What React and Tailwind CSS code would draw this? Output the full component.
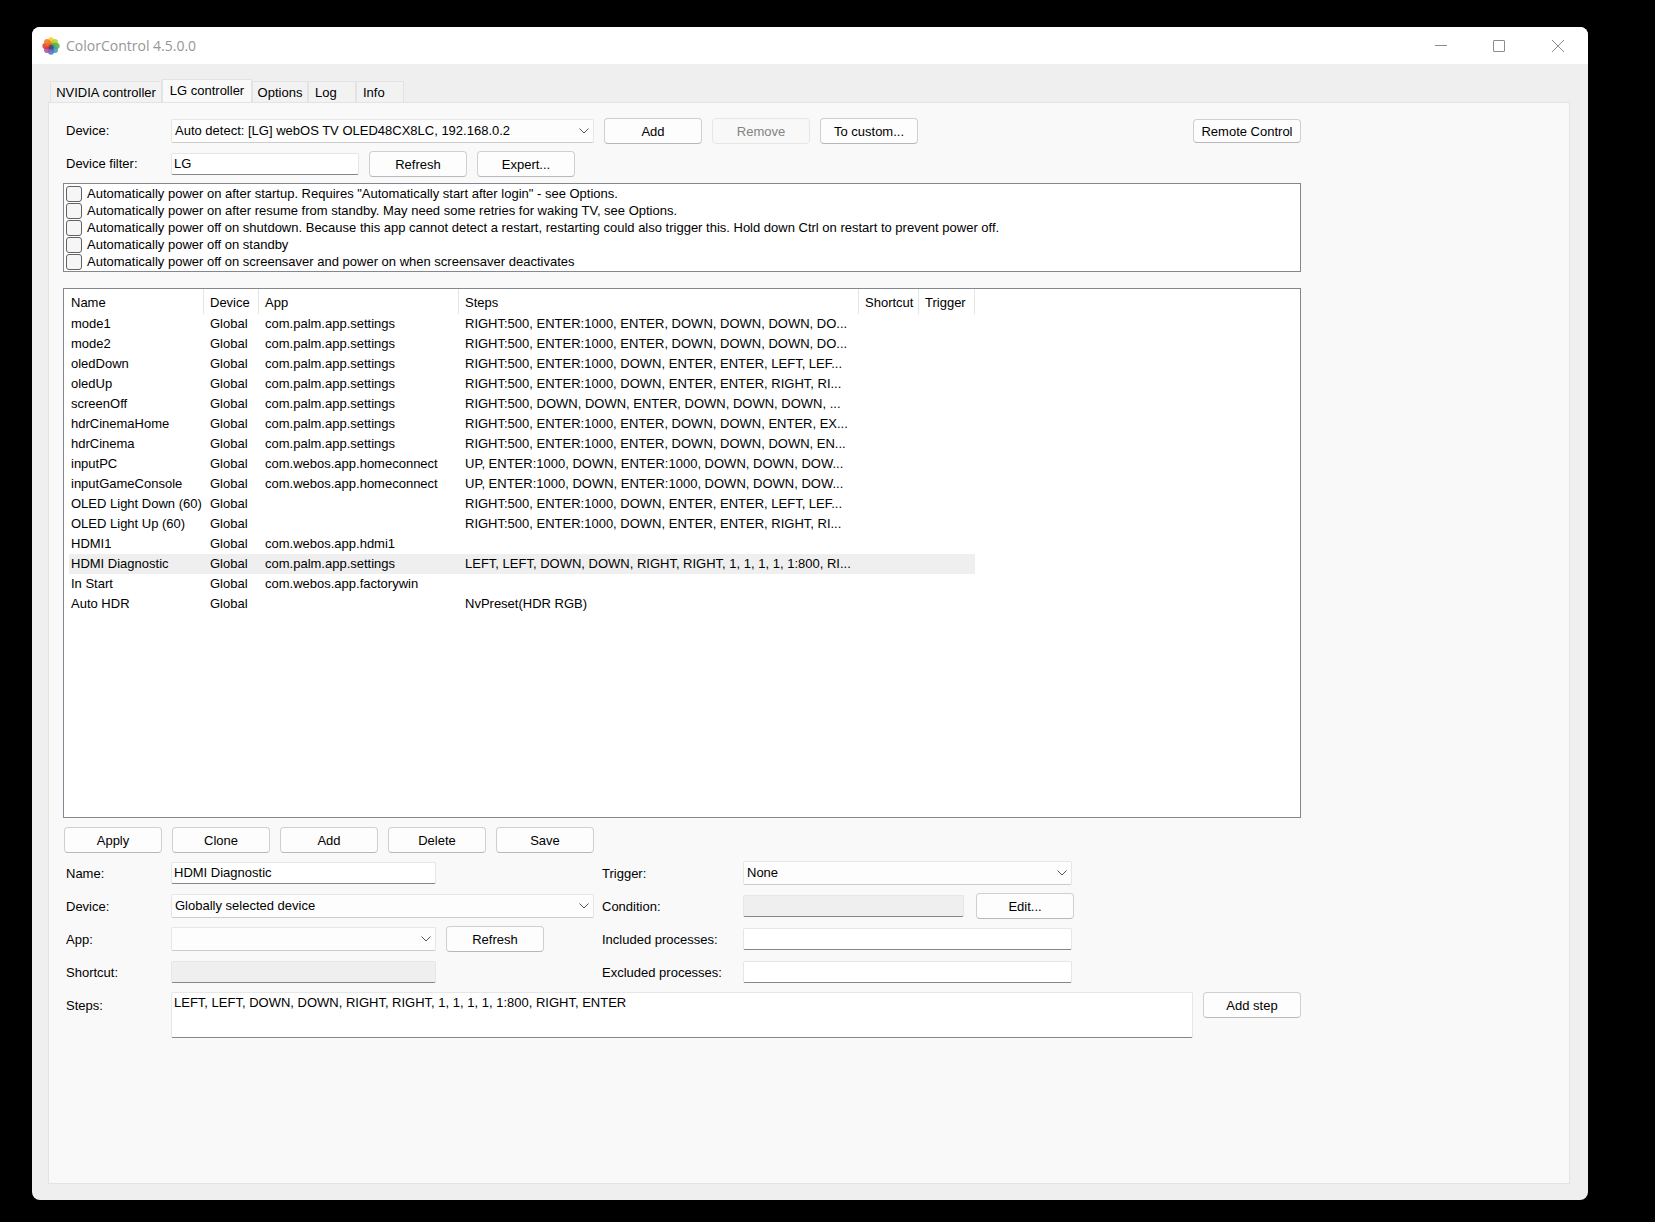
import { useState } from "react";

const tabs = [
  { txt: "NVIDIA controller", width: "w-[112px]" },
  { txt: "LG controller", width: "w-[90px]" },
  { txt: "Options", width: "w-14" },
  { txt: "Log", width: "w-12" },
  { txt: "Info", width: "w-12" },
];

const powerOptions = [
  'Automatically power on after startup. Requires "Automatically start after login" - see Options.',
  "Automatically power on after resume from standby. May need some retries for waking TV, see Options.",
  "Automatically power off on shutdown. Because this app cannot detect a restart, restarting could also trigger this. Hold down Ctrl on restart to prevent power off.",
  "Automatically power off on standby",
  "Automatically power off on screensaver and power on when screensaver deactivates",
];

const columns = [
  { txt: "Name", width: "w-[135px]", pad: "pl-[2px]" },
  { txt: "Device", width: "w-[55px]", pad: "pl-[6px]" },
  { txt: "App", width: "w-[200px]", pad: "pl-[6px]" },
  { txt: "Steps", width: "w-[400px]", pad: "pl-[6px]" },
  { txt: "Shortcut", width: "w-[60px]", pad: "pl-[6px]" },
  { txt: "Trigger", width: "w-[56px]", pad: "pl-[6px]" },
];

const settings = "com.palm.app.settings";
const homeconnect = "com.webos.app.homeconnect";

const presets = [
  ["mode1", settings, "RIGHT:500, ENTER:1000, ENTER, DOWN, DOWN, DOWN, DO..."],
  ["mode2", settings, "RIGHT:500, ENTER:1000, ENTER, DOWN, DOWN, DOWN, DO..."],
  ["oledDown", settings, "RIGHT:500, ENTER:1000, DOWN, ENTER, ENTER, LEFT, LEF..."],
  ["oledUp", settings, "RIGHT:500, ENTER:1000, DOWN, ENTER, ENTER, RIGHT, RI..."],
  ["screenOff", settings, "RIGHT:500, DOWN, DOWN, ENTER, DOWN, DOWN, DOWN, ..."],
  ["hdrCinemaHome", settings, "RIGHT:500, ENTER:1000, ENTER, DOWN, DOWN, ENTER, EX..."],
  ["hdrCinema", settings, "RIGHT:500, ENTER:1000, ENTER, DOWN, DOWN, DOWN, EN..."],
  ["inputPC", homeconnect, "UP, ENTER:1000, DOWN, ENTER:1000, DOWN, DOWN, DOW..."],
  ["inputGameConsole", homeconnect, "UP, ENTER:1000, DOWN, ENTER:1000, DOWN, DOWN, DOW..."],
  ["OLED Light Down (60)", "", "RIGHT:500, ENTER:1000, DOWN, ENTER, ENTER, LEFT, LEF..."],
  ["OLED Light Up (60)", "", "RIGHT:500, ENTER:1000, DOWN, ENTER, ENTER, RIGHT, RI..."],
  ["HDMI1", "com.webos.app.hdmi1", ""],
  ["HDMI Diagnostic", settings, "LEFT, LEFT, DOWN, DOWN, RIGHT, RIGHT, 1, 1, 1, 1, 1:800, RI..."],
  ["In Start", "com.webos.app.factorywin", ""],
  ["Auto HDR", "", "NvPreset(HDR RGB)"],
];

// clockwise, starting at the top
const petals = ["#f9c81c", "#b5cf2e", "#52ae45", "#3f9fa6", "#4a6fc4", "#a04fb0", "#e0322e", "#f4731d"];

const Logo = () => (
  <svg className="size-[18px]" viewBox="0 0 18 18" aria-hidden="true">
    {petals.map((color, idx) => (
      <ellipse
        key={color}
        cx="9"
        cy="4.8"
        rx="3.2"
        ry="4.5"
        fill={color}
        fillOpacity="0.85"
        transform={`rotate(${idx * 45} 9 9)`}
      />
    ))}
    <circle cx="9" cy="10" r="2.6" fill="#27406e" fillOpacity="0.6" />
  </svg>
);

const Button = ({ children, className = "h-[26px] w-[98px]", ...rest }) => (
  <button
    className={`${className} shrink-0 rounded border border-[#d0d0d0] border-b-[#b8b8b8] bg-[#fdfdfd] pt-px text-center whitespace-nowrap disabled:border-[#e6e6e6] disabled:bg-[#f8f8f8] disabled:text-[#838383]`}
    {...rest}
  >
    {children}
  </button>
);

const TextBox = ({ className, ...rest }) => (
  <input
    type="text"
    className={`${className} h-[22px] rounded-xs border border-[#e6e6e6] border-b-[#868686] bg-white px-[2px] pb-[2px] outline-none read-only:bg-[#efefef]`}
    {...rest}
  />
);

const Select = ({ id, value, className }) => (
  <div className={`${className} relative h-6`}>
    <select
      id={id}
      className="h-6 w-full appearance-none rounded-xs border border-[#e6e6e6] border-b-[#cccccc] bg-[#fdfdfd] pr-6 pl-[3px] outline-none"
    >
      <option>{value}</option>
    </select>
    <svg
      className="pointer-events-none absolute top-2 right-[5px] h-2 w-[10px]"
      viewBox="0 0 10 8"
      fill="none"
      stroke="#555"
      aria-hidden="true"
    >
      <path d="M.5 1.5 5 6l4.5-4.5" />
    </svg>
  </div>
);

const TitleBar = () => (
  <header className="flex h-[37px] items-center bg-white pl-[10px]">
    <Logo />
    <h1 className="ml-[6px] flex-1 font-['Open_Sans',sans-serif] text-[14px] text-[#969696]">ColorControl 4.5.0.0</h1>
    <div className="flex">
      <button className="flex h-9 w-[58px] items-center justify-center" aria-label="Minimize">
        <svg className="size-3" viewBox="0 0 12 12" stroke="#8c8c8c">
          <path d="M0 5.5h12" />
        </svg>
      </button>
      <button className="flex h-9 w-[58px] items-center justify-center" aria-label="Maximize">
        <svg className="size-3" viewBox="0 0 12 12" fill="none" stroke="#8c8c8c">
          <rect x=".5" y=".5" width="11" height="11" rx=".5" />
        </svg>
      </button>
      <button className="flex h-9 w-[60px] items-center justify-center" aria-label="Close">
        <svg className="size-3" viewBox="0 0 12 12" stroke="#8c8c8c">
          <path d="M0 0l12 12M12 0 0 12" />
        </svg>
      </button>
    </div>
  </header>
);

const PresetTable = ({ selected, onSelect }) => (
  <div className="mt-4 flex-1 border border-[#828790] bg-white pl-[5px]">
    <table className="w-[906px] table-fixed border-separate border-spacing-0 text-left">
      <thead>
        <tr className="h-[25px]">
          {columns.map((col) => (
            <th
              key={col.txt}
              className={`${col.width} ${col.pad} border-r border-[#e5e5e5] pt-[2px] pr-0 pb-0 font-normal whitespace-nowrap`}
            >
              {col.txt}
            </th>
          ))}
        </tr>
      </thead>
      <tbody>
        {presets.map(([name, app, steps]) => (
          <tr
            key={name}
            className={`h-5 ${selected === name ? "bg-[#efefef]" : ""}`}
            onClick={() => onSelect(name)}
          >
            {[name, "Global", app, steps, "", ""].map((cell, idx) => (
              <td key={idx} className={`${columns[idx].pad} py-0 pr-0 whitespace-nowrap`}>
                {cell}
              </td>
            ))}
          </tr>
        ))}
      </tbody>
    </table>
  </div>
);

const PresetForm = () => (
  <div className="mt-[7px] grid auto-rows-[26px] grid-cols-[108px_431px_141px_1fr] items-center gap-y-[7px] [&>label]:pt-[2px]">
    <label htmlFor="name" className="pl-[3px]">Name:</label>
    <div className="flex">
      <TextBox id="name" className="w-[265px]" defaultValue="HDMI Diagnostic" />
    </div>
    <label htmlFor="trigger">Trigger:</label>
    <Select id="trigger" value="None" className="w-[329px]" />

    <label htmlFor="presetDevice" className="pl-[3px]">Device:</label>
    <Select id="presetDevice" value="Globally selected device" className="w-[423px]" />
    <label htmlFor="condition">Condition:</label>
    <div className="flex items-center gap-3">
      <TextBox id="condition" className="w-[221px]" readOnly />
      <Button>Edit...</Button>
    </div>

    <label htmlFor="app" className="pl-[3px]">App:</label>
    <div className="flex items-center gap-[10px]">
      <Select id="app" value="" className="w-[265px]" />
      <Button>Refresh</Button>
    </div>
    <label htmlFor="included">Included processes:</label>
    <TextBox id="included" className="w-[329px]" />

    <label htmlFor="shortcut" className="pl-[3px]">Shortcut:</label>
    <div className="flex">
      <TextBox id="shortcut" className="w-[265px]" readOnly />
    </div>
    <label htmlFor="excluded">Excluded processes:</label>
    <TextBox id="excluded" className="w-[329px]" />
  </div>
);

const LgController = () => {
  const [selected, setSelected] = useState("HDMI Diagnostic");

  return (
    <div className="mr-[268px] ml-[14px] flex flex-1 flex-col">
      <div className="flex items-center gap-[10px]">
        <label htmlFor="device" className="w-[98px] pl-[3px]">Device:</label>
        <Select id="device" value="Auto detect: [LG] webOS TV OLED48CX8LC, 192.168.0.2" className="w-[423px]" />
        <Button>Add</Button>
        <Button disabled>Remove</Button>
        <Button>To custom...</Button>
        <Button className="ml-auto h-6 w-[108px]">Remote Control</Button>
      </div>
      <div className="mt-[7px] flex items-center gap-[10px]">
        <label htmlFor="filter" className="w-[98px] pl-[3px]">Device filter:</label>
        <TextBox id="filter" className="w-[188px]" defaultValue="LG" />
        <Button>Refresh</Button>
        <Button>Expert...</Button>
      </div>

      <div className="mt-[6px] border border-[#828790] bg-white px-[2px] pt-[1px] pb-[1px]">
        {powerOptions.map((txt) => (
          <label key={txt} className="flex h-[17px] items-center gap-[5px] whitespace-nowrap">
            <input type="checkbox" className="size-4 appearance-none rounded-[3px] border border-[#626262] bg-[#f6f6f6] checked:bg-[#0067c0]" />
            {txt}
          </label>
        ))}
      </div>

      <PresetTable selected={selected} onSelect={setSelected} />

      <div className="mt-[9px] flex gap-[10px] pl-[1px]">
        {["Apply", "Clone", "Add", "Delete", "Save"].map((txt) => (
          <Button key={txt}>{txt}</Button>
        ))}
      </div>

      <PresetForm />

      <div className="mt-[7px] flex items-start gap-[10px]">
        <label htmlFor="steps" className="w-[98px] pt-[6px] pl-[3px]">Steps:</label>
        <textarea
          id="steps"
          className="h-[46px] flex-1 resize-none rounded-xs border border-[#e6e6e6] border-b-[#868686] bg-white px-[2px] pt-[2px] outline-none"
          defaultValue="LEFT, LEFT, DOWN, DOWN, RIGHT, RIGHT, 1, 1, 1, 1, 1:800, RIGHT, ENTER"
        />
        <Button>Add step</Button>
      </div>
    </div>
  );
};

export default function App() {
  const [activeTab, setActiveTab] = useState("LG controller");

  return (
    <div className="flex min-h-screen flex-col bg-black pt-[27px] pr-[67px] pb-[22px] pl-8 font-['Liberation_Sans',Arial,sans-serif] text-[13px] leading-4 text-black">
      <div className="flex flex-1 flex-col overflow-hidden rounded-lg bg-[#efefef]">
        <TitleBar />
        <main className="flex flex-1 flex-col pt-4 pr-[18px] pb-4 pl-4">
          <nav className="flex h-[22px] items-end pl-[2px]" role="tablist">
            {tabs.map((tab) => (
              <button
                key={tab.txt}
                role="tab"
                aria-selected={activeTab === tab.txt}
                className={`${tab.width} border border-b-0 border-[#e3e3e3] whitespace-nowrap ${
                  activeTab === tab.txt ? "-mb-px h-6 bg-[#f9f9f9] pb-[2px]" : "h-[21px] bg-[#f2f2f2] pt-px"
                } ${tab.txt === "Log" || tab.txt === "Info" ? "pl-[6px] text-left" : "text-center"}`}
                onClick={() => setActiveTab(tab.txt)}
              >
                {tab.txt}
              </button>
            ))}
          </nav>
          <section className="flex flex-1 flex-col border border-[#e3e3e3] bg-[#f9f9f9] pt-[15px] pb-[145px]">
            <LgController />
          </section>
        </main>
      </div>
    </div>
  );
}
